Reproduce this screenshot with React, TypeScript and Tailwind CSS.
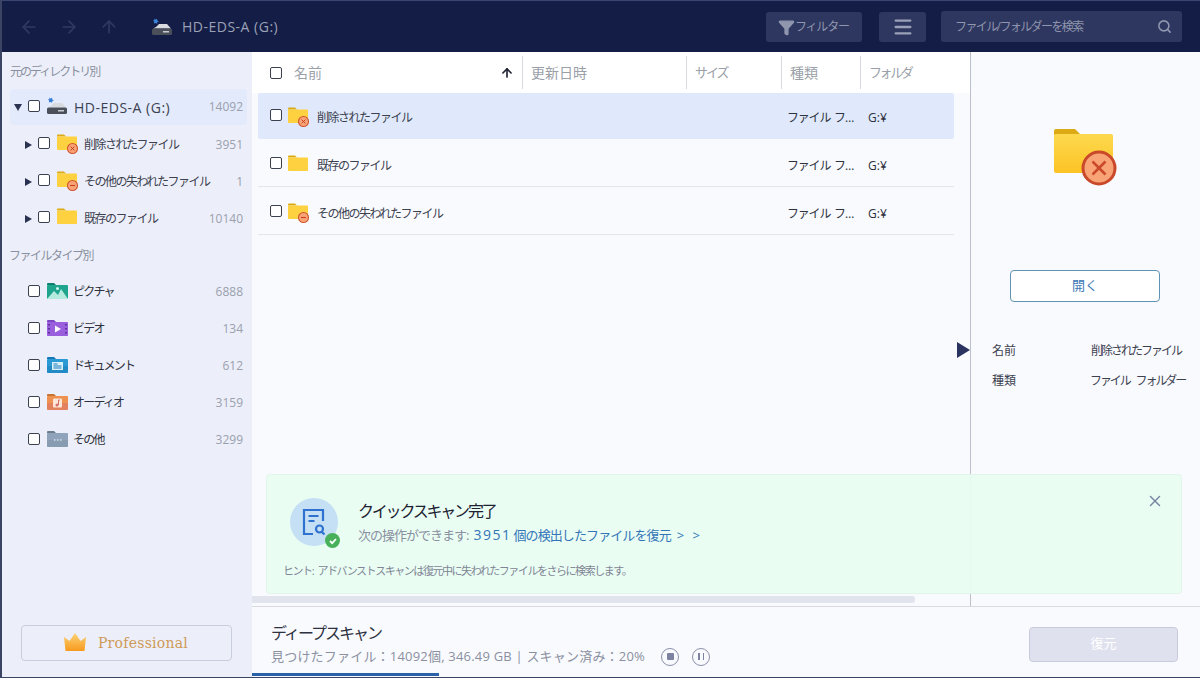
import React from 'react';
import { ArrowLeft, ArrowRight, ArrowUp, Search, Menu, Funnel, X, ArrowUp as SortUp } from 'lucide-react';

const font = "font-['Open_Sans','Noto_Sans_CJK_JP',sans-serif]";
const jp = 'tracking-[-1.5px]';

function Check({ className = '' }: { className?: string }) {
  return <span className={`block w-[12px] h-[12px] shrink-0 rounded-[2px] border-[1.5px] border-[#3c4150] bg-white ${className}`} />;
}

function Folder({ badge, size = 20 }: { badge?: 'x' | 'minus'; size?: number }) {
  return (
    <svg width={size + 2} height={size + 2} viewBox="0 0 22 22" className="shrink-0">
      <path d="M0 2.5a1 1 0 0 1 1-1h6l2 2H0z" fill="#dcaa14" />
      <rect x="0" y="3.5" width="20" height="13.5" rx="1" fill="#fdd13f" />
      {badge && <circle cx="15.5" cy="15.5" r="5" fill="#f9a477" stroke="#d2542c" strokeWidth="1.1" />}
      {badge === 'x' && <path d="M13.6 13.6l3.8 3.8M17.4 13.6l-3.8 3.8" stroke="#c8401e" strokeWidth="1" />}
      {badge === 'minus' && <path d="M13 15.5h5" stroke="#c8401e" strokeWidth="1.1" />}
    </svg>
  );
}

function Drive() {
  return (
    <svg width="22" height="20" viewBox="0 0 22 20" className="shrink-0">
      <path d="M3 1.5l1.5 1 1.5-.8.4 1.7 1.4 1-1.5.8-.3 1.6-1.5-.9-1.6.5.2-1.7L2 3.500l1.500-.4z" fill="#3b82d6" />
      <path d="M5 10l3-3h8l4 4.500H2z" fill="#d8dadf" />
      <rect x="1" y="11.500" width="20" height="6.500" rx="1.500" fill="#4b4f59" />
      <rect x="12" y="14" width="6" height="1.500" fill="#c8cbd2" />
    </svg>
  );
}

function TypeIcon({ tab, from, to, children }: { tab: string; from: string; to: string; children: React.ReactNode }) {
  return (
    <svg width="21" height="16" viewBox="0 0 21 16" className="shrink-0">
      <path d="M0 1a1 1 0 0 1 1-1h6l2 2H0z" fill={tab} />
      <rect x="0" y="2" width="21" height="14" rx="1" fill={from} />
      <rect x="0" y="9" width="21" height="7" rx="1" fill={to} opacity="0.5" />
      {children}
    </svg>
  );
}

const typeIcons: Record<string, React.ReactNode> = {
  picture: (
    <TypeIcon tab="#0f7f70" from="#1fa48e" to="#1fa48e">
      <path d="M0 16l7-8 4 4 3-6 7 10z" fill="#b5eadf" />
      <circle cx="10.500" cy="5.500" r="1.500" fill="#d8f5ef" />
    </TypeIcon>
  ),
  video: (
    <TypeIcon tab="#7b45c4" from="#9a5fdc" to="#9a5fdc">
      <path d="M8 5.500l6 3.500-6 3.500z" fill="#fff" />
      <path d="M2 4v1.500M2 8v1.500M2 12v1.500M19 4v1.500M19 8v1.500M19 12v1.500" stroke="#4a2688" strokeWidth="1.500" />
    </TypeIcon>
  ),
  document: (
    <TypeIcon tab="#1477b8" from="#2b9ad4" to="#1a7cb8">
      <rect x="5" y="5" width="11" height="8" fill="#d9f0fb" />
      <path d="M6.500 7h4M6.500 9h8M6.500 11h8" stroke="#1a7cb8" strokeWidth="1" />
    </TypeIcon>
  ),
  audio: (
    <TypeIcon tab="#c7742f" from="#ee9150" to="#d8706a">
      <rect x="6" y="4.500" width="9" height="9" rx="1" fill="#fbe6d8" />
      <path d="M11.500 6v5M11.500 6h1.500" stroke="#d8706a" strokeWidth="1" />
      <circle cx="10" cy="11" r="1.500" fill="#d8706a" />
    </TypeIcon>
  ),
  other: (
    <TypeIcon tab="#6d7d90" from="#8fa4ba" to="#7f93a8">
      <path d="M7 9h1.500M10 9h1.500M13 9h1.500" stroke="#fff" strokeWidth="1.200" />
    </TypeIcon>
  ),
};

function Arrow({ down }: { down?: boolean }) {
  return (
    <span
      className={
        down
          ? 'block w-0 h-0 border-x-[4px] border-x-transparent border-t-[7px] border-t-[#2a3252]'
          : 'block w-0 h-0 border-y-[4px] border-y-transparent border-l-[7px] border-l-[#2a3252]'
      }
    />
  );
}

const folderTree = [
  { name: '削除されたファイル', count: 3951, badge: 'x' as const },
  { name: 'その他の失われたファイル', count: 1, badge: 'minus' as const },
  { name: '既存のファイル', count: 10140 },
];

const fileTypes = [
  { name: 'ピクチャ', count: 6888, icon: 'picture' },
  { name: 'ビデオ', count: 134, icon: 'video' },
  { name: 'ドキュメント', count: 612, icon: 'document' },
  { name: 'オーディオ', count: 3159, icon: 'audio' },
  { name: 'その他', count: 3299, icon: 'other' },
];

const files = [
  { name: '削除されたファイル', badge: 'x' as const, selected: true },
  { name: '既存のファイル' },
  { name: 'その他の失われたファイル', badge: 'minus' as const },
];

function Sidebar() {
  return (
    <aside className="w-[250px] shrink-0 bg-[#eceff9] flex flex-col pl-[8px] pr-[5px]">
      <div className="h-[37px] pt-[11px] text-[12px] text-[#8a90a0] tracking-[-2px]">元のディレクトリ別</div>
      <div className="h-[36px] rounded-[4px] bg-[#e2eafb] flex items-center pl-[4px] pr-[4px]">
        <Arrow down />
        <Check className="ml-[6px] -mt-[2px]" />
        <span className="ml-[6px] -mt-[2px]"><Drive /></span>
        <span className="ml-[6px] text-[14px] tracking-[0.5px] text-[#3c4150] flex-1">HD-EDS-A (G:)</span>
        <span className="text-[12px] text-[#9aa0ae]">14092</span>
      </div>
      {folderTree.map((f) => (
        <div key={f.name} className="h-[37px] flex items-center pl-[15px] pr-[4px] pt-[2px]">
          <Arrow />
          <Check className="ml-[6px] -mt-[3px]" />
          <span className="ml-[7px] -mt-[1px]"><Folder badge={f.badge} /></span>
          <span className={`ml-[5px] text-[12px] text-[#3c4150] flex-1 ${jp}`}>{f.name}</span>
          <span className="text-[12px] text-[#9aa0ae]">{f.count}</span>
        </div>
      ))}
      <div className={`h-[38px] pt-[11px] -ml-[1px] text-[12px] text-[#8a90a0] ${jp}`}>ファイルタイプ別</div>
      {fileTypes.map((t) => (
        <div key={t.name} className="h-[36.800px] flex items-center pl-[18px] pr-[4px]">
          <Check className="-mt-[2px]" />
          <span className="ml-[7px] -mt-[2px]">{typeIcons[t.icon]}</span>
          <span className="ml-[5px] text-[12px] text-[#2d3140] flex-1 tracking-[-1.8px]">{t.name}</span>
          <span className="text-[12px] text-[#9aa0ae]">{t.count}</span>
        </div>
      ))}
      <div className="mt-auto mb-[16px] ml-[11px] mr-[15px] h-[36px] rounded-[4px] border border-[#c9cede] flex items-center justify-center gap-[11px] pr-[2px]">
        <svg width="24" height="19" viewBox="0 0 24 19" className="-mt-[4px]">
          <defs>
            <linearGradient id="crown" x1="0" y1="0" x2="0" y2="1">
              <stop offset="0" stopColor="#fcd377" />
              <stop offset="1" stopColor="#f79a1e" />
            </linearGradient>
          </defs>
          <path d="M1 5l5.500 4L12 1l5.500 8L23 5l-1.500 14h-19z" fill="url(#crown)" />
        </svg>
        <span className="font-['DejaVu_Serif',serif] text-[14px] tracking-[0.25px] text-[#cf9a58]">Professional</span>
      </div>
    </aside>
  );
}

function FileList() {
  return (
    <div className="flex-1 min-w-0 flex flex-col">
      <div className="h-[41px] shrink-0 bg-white flex items-center text-[14px] text-[#9a9fa9]">
        <div className="w-[271px] h-[33px] shrink-0 flex items-center pl-[18px] border-r border-[#d6d9df]">
          <Check />
          <span className="ml-[12px] flex-1">名前</span>
          <SortUp size={14} strokeWidth={2.8} className="text-[#1d2130] mr-[8px]" />
        </div>
        <div className="w-[164px] h-[33px] shrink-0 flex items-center pl-[8px] border-r border-[#d6d9df]">更新日時</div>
        <div className="w-[95px] h-[33px] shrink-0 flex items-center pl-[8px] border-r border-[#d6d9df] text-[13px] tracking-[-2px]">サイズ</div>
        <div className="w-[79px] h-[33px] shrink-0 flex items-center pl-[8px] border-r border-[#d6d9df]">種類</div>
        <div className="pl-[8px] text-[13px] tracking-[-2.4px]">フォルダ</div>
      </div>
      <div className="ml-[6px] mr-[16px] flex flex-col">
        {files.map((f) => (
          <div
            key={f.name}
            className={
              f.selected
                ? 'h-[46px] flex items-center bg-[#dfe9fb] rounded-[2px] pl-[12px]'
                : 'h-[48px] flex items-center border-b border-[#e4e6ea] pl-[12px] pt-[3px]'
            }
          >
            <Check className="-mt-[2px]" />
            <span className="ml-[6px] pt-[1px]"><Folder badge={f.badge} /></span>
            <span className={`ml-[7px] w-[470px] text-[12px] text-[#3c4150] pt-[3px] ${jp}`}>{f.name}</span>
            <span className="w-[81px] text-[12px] text-[#2d3140] tracking-[-1.2px] [word-spacing:2px] pt-[3px]">ファイル フ…</span>
            <span className="text-[12px] text-[#2d3140] pt-[3px]">G:¥</span>
          </div>
        ))}
      </div>
    </div>
  );
}

function DetailPanel() {
  return (
    <div className="w-[230px] shrink-0 border-l border-[#b9c0cc] flex flex-col relative">
      <span className="absolute left-[-14px] top-[290px] w-0 h-0 border-y-[8px] border-y-transparent border-l-[13px] border-l-[#2a3360]" />
      <div className="mt-[76px] ml-[82px]">
        <svg width="64" height="58" viewBox="0 0 64 58">
          <defs>
            <linearGradient id="folderFill" x1="0" y1="0" x2="0" y2="1">
              <stop offset="0" stopColor="#fdd94f" />
              <stop offset="1" stopColor="#fcc324" />
            </linearGradient>
          </defs>
          <path d="M1 3a2 2 0 0 1 2-2h19l6 6H1z" fill="#dcaa14" />
          <rect x="1" y="6" width="59" height="39" rx="2" fill="url(#folderFill)" />
          <circle cx="46" cy="40" r="16" fill="#f9a477" stroke="#c9492a" strokeWidth="3" />
          <path d="M39.500 33.500l13 13M52.500 33.500l-13 13" stroke="#c9492a" strokeWidth="2.500" />
        </svg>
      </div>
      <button className="mt-[84px] ml-[39px] w-[150px] h-[32px] rounded-[4px] border border-[#5f93b3] bg-white text-[13px] text-[#3d78b5]">開く</button>
      <div className="mt-[40px] ml-[21px] grid grid-cols-[99px_1fr] gap-y-[12px] text-[12px] text-[#3c4150] leading-[18px]">
        <span>名前</span>
        <span className="tracking-[-2px]">削除されたファイル</span>
        <span>種類</span>
        <span className="-ml-[1px] tracking-[-2.1px] [word-spacing:5px]">ファイル フォルダー</span>
      </div>
    </div>
  );
}

export default function App() {
  return (
    <div className={`w-[1200px] h-[678px] flex flex-col overflow-hidden bg-[#f9fafe] border-l-2 border-b border-[#3b4463] ${font}`}>
      <header className="h-[52px] shrink-0 bg-[#141d45] border-t border-[#3a4470] flex items-center">
        <div className="flex items-center gap-[20px] ml-[17px] text-[#2f3a63]">
          <ArrowLeft size={20} />
          <ArrowRight size={20} />
          <ArrowUp size={20} />
        </div>
        <span className="ml-[32px]"><Drive /></span>
        <span className="ml-[9px] text-[14px] tracking-[0.5px] text-[#9ba1b6]">HD-EDS-A (G:)</span>
        <div className="ml-auto flex items-center pr-[18px]">
          <div className="w-[96px] h-[30px] rounded-[3px] bg-[#2e3760] flex items-center pl-[12px] text-[12px] text-[#8f96ae] tracking-[-1.2px] mt-[1px]">
            <Funnel size={17} fill="#8f96ae" className="shrink-0" />
            フィルター
          </div>
          <div className="ml-[17px] w-[47px] h-[30px] rounded-[3px] bg-[#2e3760] flex items-center justify-center text-[#9ba1b6]">
            <Menu size={22} strokeWidth={2.5} />
          </div>
          <div className="ml-[15px] w-[241px] h-[31px] rounded-[3px] bg-[#2e3760] flex items-center justify-between pl-[14px] pr-[10px] text-[12px] text-[#8f96ae] tracking-[-1.6px]">
            ファイル/フォルダーを検索
            <Search size={15} strokeWidth={2.5} />
          </div>
        </div>
      </header>

      <div className="flex-1 min-h-0 flex">
        <Sidebar />
        <div className="flex-1 min-w-0 flex flex-col relative">
          <div className="flex-1 min-h-0 flex">
            <FileList />
            <DetailPanel />
          </div>

          <div className="absolute left-[14px] top-[422px] w-[916px] h-[120px] rounded-[4px] bg-[#e8fdf2]/95 border border-[#e1f5ea] pl-[23px] pr-[18px] pt-[23px]">
            <div className="flex items-start">
              <div className="relative w-[48px] h-[48px] rounded-full bg-[#c5e0f4] flex items-center justify-center shrink-0">
                <svg width="24" height="28" viewBox="0 0 24 28" fill="none" stroke="#2f71d0" strokeWidth="2.200">
                  <path d="M21 13V2H2v24h9" />
                  <path d="M6.500 8h10M6.500 13h6" />
                  <circle cx="17.500" cy="21" r="3.500" />
                  <path d="M20 24l2.500 2.500" />
                </svg>
                <span className="absolute right-[-2px] bottom-[-2px] w-[15px] h-[15px] rounded-full bg-[#48b05a] flex items-center justify-center">
                  <svg width="10" height="10" viewBox="0 0 10 10" fill="none" stroke="#fff" strokeWidth="1.800"><path d="M2 5l2.200 2.200L8 3" /></svg>
                </span>
              </div>
              <div className="ml-[20px] mt-[2px]">
                <div className="text-[16px] leading-[22px] text-[#1d2130] tracking-[-2.2px]">クイックスキャン完了</div>
                <div className="text-[13px] leading-[25px] text-[#8a90a0]">
                  <span className="tracking-[-1px]">次の操作ができます:</span>
                  <span className="ml-[5px] text-[#3475b8] text-[14px] tracking-[1.5px]">3951</span>
                  <span className="ml-[2px] text-[#3475b8] tracking-[-0.9px]">個の検出したファイルを復元</span>
                  <span className="ml-[6px] text-[#3475b8] tracking-[2.5px]">&gt; &gt;</span>
                </div>
              </div>
            </div>
            <div className="mt-[15px] -ml-[7px] text-[11px] text-[#7f8594] tracking-[-1.450px] [word-spacing:3px]">ヒント: アドバンストスキャンは復元中に失われたファイルをさらに検索します。</div>
            <X size={18} className="absolute right-[17px] top-[17px] text-[#7787a3]" />
          </div>

          <div className="absolute left-0 top-[544px] w-[663px] h-[7px] rounded-r-[3px] bg-[#e1e4ec]" />

          <footer className="h-[71px] shrink-0 bg-[#f9fafe] border-t border-[#d8dae0] flex items-center justify-between relative pl-[19px] pr-[22px] pt-[4px]">
            <div>
              <div className="text-[16px] leading-[22px] text-[#2d3140] tracking-[-2px]">ディープスキャン</div>
              <div className="mt-[3px] flex items-center text-[13px] text-[#8a90a0]">
                <span className="tracking-[0.2px]">見つけたファイル：14092個, 346.49 GB | スキャン済み：20%</span>
                <span className="ml-[16px] w-[18px] h-[18px] rounded-full border border-[#8a90a8] flex items-center justify-center">
                  <span className="w-[7px] h-[7px] rounded-[1px] bg-[#7c82a0]" />
                </span>
                <span className="ml-[13px] w-[18px] h-[18px] rounded-full border border-[#8a90a8] flex items-center justify-center gap-[3px]">
                  <span className="w-[1.500px] h-[7px] bg-[#7c82a0]" />
                  <span className="w-[1.500px] h-[7px] bg-[#7c82a0]" />
                </span>
              </div>
            </div>
            <button className="w-[149px] h-[35px] rounded-[4px] bg-[#dfe1ee] border border-[#c8cbdb] text-[13px] text-white">復元</button>
            <div className="absolute left-0 bottom-[1px] w-[187px] h-[3px] bg-[#2a62a8]" />
          </footer>
        </div>
      </div>
    </div>
  );
}
